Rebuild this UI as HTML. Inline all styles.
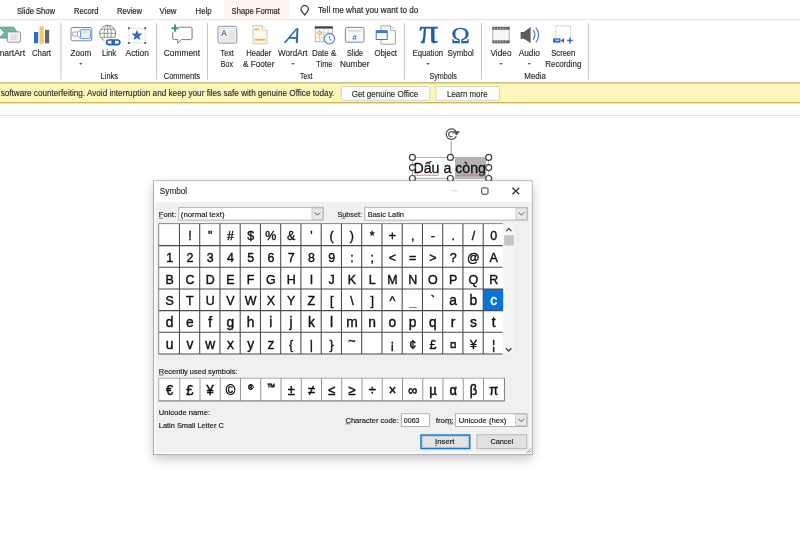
<!DOCTYPE html>
<html lang="en">
<head>
<meta charset="utf-8">
<title>PowerPoint - Symbol dialog</title>
<style>
html,body{margin:0;padding:0;background:#fff;overflow:hidden}
body{width:800px;height:533px;font-family:'Liberation Sans',sans-serif}
svg{display:block;opacity:.999;font-family:'Liberation Sans',sans-serif}
text{white-space:pre}
</style>
</head>
<body>
<svg width="800" height="533" viewBox="0 0 800 533">
<defs>
<filter id="shadow" x="-15%" y="-15%" width="130%" height="135%">
<feGaussianBlur in="SourceAlpha" stdDeviation="6"/>
<feOffset dx="0" dy="4" result="b"/>
<feComponentTransfer><feFuncA type="linear" slope="0.24"/></feComponentTransfer>
<feMerge><feMergeNode/><feMergeNode in="SourceGraphic"/></feMerge>
</filter>
</defs>
<rect width="800" height="533" fill="#ffffff"/>

<g id="tabbar">
<rect x="0" y="0" width="800" height="19.5" fill="#ffffff"/>
<rect x="223.6" y="0" width="65.6" height="19.3" fill="#fdf5ee"/>
<rect x="0" y="19.2" width="800" height="1" fill="#e1e2e3"/>
<text x="17.00" y="13.50" font-size="9" fill="#272727" textLength="38.00" lengthAdjust="spacingAndGlyphs" stroke="#272727" stroke-width="0.18">Slide Show</text>
<text x="74.00" y="13.50" font-size="9" fill="#272727" textLength="24.50" lengthAdjust="spacingAndGlyphs" stroke="#272727" stroke-width="0.18">Record</text>
<text x="117.00" y="13.50" font-size="9" fill="#272727" textLength="25.00" lengthAdjust="spacingAndGlyphs" stroke="#272727" stroke-width="0.18">Review</text>
<text x="159.60" y="13.50" font-size="9" fill="#272727" textLength="16.80" lengthAdjust="spacingAndGlyphs" stroke="#272727" stroke-width="0.18">View</text>
<text x="195.60" y="13.50" font-size="9" fill="#272727" textLength="16.00" lengthAdjust="spacingAndGlyphs" stroke="#272727" stroke-width="0.18">Help</text>
<text x="231.60" y="13.50" font-size="9" fill="#272727" textLength="48.40" lengthAdjust="spacingAndGlyphs" stroke="#272727" stroke-width="0.18">Shape Format</text>
<text x="318.00" y="12.50" font-size="9" fill="#272727" textLength="100.40" lengthAdjust="spacingAndGlyphs" stroke="#272727" stroke-width="0.18">Tell me what you want to do</text>
<path d="M304.700 5.500a3.700 3.700 0 0 1 3.700 3.700c0 1.800-1.500 3-3.700 5.800c-2.200-2.800-3.700-4-3.700-5.800a3.700 3.700 0 0 1 3.700-3.700z" fill="#fff" stroke="#3a3a3a" stroke-width="1.25" stroke-linejoin="round"/>
</g>
<g id="ribbon">
<rect x="60.50" y="23" width="1" height="56.5" fill="#c6c6c6"/>
<rect x="156.10" y="23" width="1" height="56.5" fill="#c6c6c6"/>
<rect x="207.00" y="23" width="1" height="56.5" fill="#c6c6c6"/>
<rect x="403.80" y="23" width="1" height="56.5" fill="#c6c6c6"/>
<rect x="480.90" y="23" width="1" height="56.5" fill="#c6c6c6"/>
<rect x="587.80" y="23" width="1" height="56.5" fill="#c6c6c6"/>
<text x="-8.50" y="55.70" font-size="9" fill="#2a2a2a" textLength="33.50" lengthAdjust="spacingAndGlyphs" stroke="#2a2a2a" stroke-width="0.15">SmartArt</text>
<text x="32.00" y="55.70" font-size="9" fill="#2a2a2a" textLength="19.00" lengthAdjust="spacingAndGlyphs" stroke="#2a2a2a" stroke-width="0.15">Chart</text>
<text x="70.60" y="55.70" font-size="9" fill="#2a2a2a" textLength="20.70" lengthAdjust="spacingAndGlyphs" stroke="#2a2a2a" stroke-width="0.15">Zoom</text>
<text x="101.90" y="55.70" font-size="9" fill="#2a2a2a" textLength="14.40" lengthAdjust="spacingAndGlyphs" stroke="#2a2a2a" stroke-width="0.15">Link</text>
<text x="125.60" y="55.70" font-size="9" fill="#2a2a2a" textLength="23.20" lengthAdjust="spacingAndGlyphs" stroke="#2a2a2a" stroke-width="0.15">Action</text>
<text x="163.80" y="55.70" font-size="9" fill="#2a2a2a" textLength="36.20" lengthAdjust="spacingAndGlyphs" stroke="#2a2a2a" stroke-width="0.15">Comment</text>
<text x="220.60" y="55.70" font-size="9" fill="#2a2a2a" textLength="13.20" lengthAdjust="spacingAndGlyphs" stroke="#2a2a2a" stroke-width="0.15">Text</text>
<text x="220.80" y="66.80" font-size="9" fill="#2a2a2a" textLength="12.20" lengthAdjust="spacingAndGlyphs" stroke="#2a2a2a" stroke-width="0.15">Box</text>
<text x="246.20" y="55.70" font-size="9" fill="#2a2a2a" textLength="25.10" lengthAdjust="spacingAndGlyphs" stroke="#2a2a2a" stroke-width="0.15">Header</text>
<text x="243.00" y="66.80" font-size="9" fill="#2a2a2a" textLength="31.40" lengthAdjust="spacingAndGlyphs" stroke="#2a2a2a" stroke-width="0.15">&amp; Footer</text>
<text x="278.00" y="55.70" font-size="9" fill="#2a2a2a" textLength="29.50" lengthAdjust="spacingAndGlyphs" stroke="#2a2a2a" stroke-width="0.15">WordArt</text>
<text x="311.90" y="55.70" font-size="9" fill="#2a2a2a" textLength="24.40" lengthAdjust="spacingAndGlyphs" stroke="#2a2a2a" stroke-width="0.15">Date &amp;</text>
<text x="316.30" y="66.80" font-size="9" fill="#2a2a2a" textLength="16.20" lengthAdjust="spacingAndGlyphs" stroke="#2a2a2a" stroke-width="0.15">Time</text>
<text x="347.00" y="55.70" font-size="9" fill="#2a2a2a" textLength="16.00" lengthAdjust="spacingAndGlyphs" stroke="#2a2a2a" stroke-width="0.15">Slide</text>
<text x="340.00" y="66.80" font-size="9" fill="#2a2a2a" textLength="29.40" lengthAdjust="spacingAndGlyphs" stroke="#2a2a2a" stroke-width="0.15">Number</text>
<text x="374.40" y="55.70" font-size="9" fill="#2a2a2a" textLength="22.60" lengthAdjust="spacingAndGlyphs" stroke="#2a2a2a" stroke-width="0.15">Object</text>
<text x="412.50" y="55.70" font-size="9" fill="#2a2a2a" textLength="30.50" lengthAdjust="spacingAndGlyphs" stroke="#2a2a2a" stroke-width="0.15">Equation</text>
<text x="447.50" y="55.70" font-size="9" fill="#2a2a2a" textLength="26.30" lengthAdjust="spacingAndGlyphs" stroke="#2a2a2a" stroke-width="0.15">Symbol</text>
<text x="490.50" y="55.70" font-size="9" fill="#2a2a2a" textLength="21.00" lengthAdjust="spacingAndGlyphs" stroke="#2a2a2a" stroke-width="0.15">Video</text>
<text x="518.70" y="55.70" font-size="9" fill="#2a2a2a" textLength="21.30" lengthAdjust="spacingAndGlyphs" stroke="#2a2a2a" stroke-width="0.15">Audio</text>
<text x="551.30" y="55.70" font-size="9" fill="#2a2a2a" textLength="24.00" lengthAdjust="spacingAndGlyphs" stroke="#2a2a2a" stroke-width="0.15">Screen</text>
<text x="545.30" y="66.80" font-size="9" fill="#2a2a2a" textLength="36.00" lengthAdjust="spacingAndGlyphs" stroke="#2a2a2a" stroke-width="0.15">Recording</text>
<text x="100.60" y="79.20" font-size="9" fill="#2a2a2a" textLength="17.40" lengthAdjust="spacingAndGlyphs" stroke="#2a2a2a" stroke-width="0.15">Links</text>
<text x="163.80" y="79.20" font-size="9" fill="#2a2a2a" textLength="36.20" lengthAdjust="spacingAndGlyphs" stroke="#2a2a2a" stroke-width="0.15">Comments</text>
<text x="300.00" y="79.20" font-size="9" fill="#2a2a2a" textLength="12.50" lengthAdjust="spacingAndGlyphs" stroke="#2a2a2a" stroke-width="0.15">Text</text>
<text x="429.40" y="79.20" font-size="9" fill="#2a2a2a" textLength="27.50" lengthAdjust="spacingAndGlyphs" stroke="#2a2a2a" stroke-width="0.15">Symbols</text>
<text x="524.30" y="79.20" font-size="9" fill="#2a2a2a" textLength="21.70" lengthAdjust="spacingAndGlyphs" stroke="#2a2a2a" stroke-width="0.15">Media</text>
<path d="M79.10 63h3.400l-1.700 2z" fill="#5a5a5a"/>
<path d="M291.30 63h3.400l-1.700 2z" fill="#5a5a5a"/>
<path d="M426.30 63h3.400l-1.700 2z" fill="#5a5a5a"/>
<path d="M499.30 63h3.400l-1.700 2z" fill="#5a5a5a"/>
<path d="M527.50 63h3.400l-1.700 2z" fill="#5a5a5a"/>
<g id="ic-smartart"><path d="M-.500 27.200h14l3 4-3.400 6.800h-13.600l5-5.500z" fill="#74b49c" stroke="#4f9a7e" stroke-width="0.9"/><rect x="7.300" y="31.900" width="13.200" height="10.300" rx="1.300" fill="#f6f4f4" stroke="#8c8c8c" stroke-width="0.9"/><path d="M10 35h8M10 37.200h8M10 39.400h8M12.600 34v6.400M15.400 34v6.400" stroke="#e9c9cc" stroke-width="0.7" fill="none"/></g>
<g id="ic-chart"><rect x="38.900" y="25.800" width="5.400" height="18.400" fill="#fbf0c6" opacity="0.7"/><rect x="34" y="32" width="4.200" height="11.300" fill="#2f6fc2"/><rect x="39.600" y="26.600" width="4" height="17" fill="#f3c964"/><rect x="45" y="29.800" width="4.200" height="13.500" fill="#6b6462"/></g>
<g id="ic-zoom" fill="none"><rect x="71" y="27.500" width="20.800" height="13.300" rx="1.800" stroke="#868686" stroke-width="1" fill="#fbfbfb"/><rect x="72.800" y="32" width="4.600" height="4" rx="0.600" stroke="#7f93ad" stroke-width="0.8"/><path d="M77.400 32.300l3.200-2.300M77.400 35.700l3.200 2.600" stroke="#5b8fd0" stroke-width="0.8"/><rect x="80.600" y="29.600" width="9.800" height="9" rx="0.800" stroke="#5b8fd0" stroke-width="0.9" fill="#e8f0fa"/><path d="M83 32h4" stroke="#e8b58c" stroke-width="0.8"/></g>
<g id="ic-link" fill="none"><circle cx="107.700" cy="33.300" r="8" stroke="#868686" stroke-width="1" fill="#fcfcfc"/><ellipse cx="107.700" cy="33.300" rx="3.600" ry="8" stroke="#868686" stroke-width="0.8"/><path d="M99.700 33.300h16M101 29.300h13.400M101 37.300h13.400M107.700 25.300v16" stroke="#868686" stroke-width="0.8"/><rect x="104.500" y="38" width="17" height="8" fill="#fff" stroke="none"/><rect x="106.600" y="40" width="7.600" height="4.600" rx="2.300" stroke="#1f5eb4" stroke-width="1.700"/><rect x="112.200" y="40" width="7.600" height="4.600" rx="2.300" stroke="#1f5eb4" stroke-width="1.700"/></g>
<g id="ic-action"><rect x="128.800" y="28.200" width="16.400" height="14.800" fill="#fdfdfd" stroke="#b9b9b9" stroke-width="0.8" stroke-dasharray="1 1"/><g fill="#5a5a5a"><rect x="127.900" y="27.300" width="1.900" height="1.900"/><rect x="144.300" y="27.300" width="1.900" height="1.900"/><rect x="127.900" y="42" width="1.900" height="1.900"/><rect x="144.300" y="42" width="1.900" height="1.900"/></g><path d="M137 29.800l1.410 3.760 4.010.180-3.140 2.500 1.070 3.870-3.350-2.210-3.350 2.210 1.070-3.870-3.140-2.500 4.010-.180z" fill="#2c6bc0"/></g>
<g id="ic-comment" fill="none"><path d="M174.300 27.200h16.200a1.600 1.600 0 0 1 1.600 1.600v9.200a1.600 1.600 0 0 1-1.600 1.600h-9l-3.700 3.600v-3.600h-3.500a1.600 1.600 0 0 1-1.600-1.600v-9.200a1.600 1.600 0 0 1 1.600-1.600z" stroke="#7a7a7a" stroke-width="1" fill="#fdfdfd"/><rect x="171" y="24.500" width="8" height="7.600" fill="#fff" stroke="none"/><path d="M175 24.600v7.200M171.400 28.200h7.200" stroke="#3c9a70" stroke-width="1.900"/></g>
<g id="ic-textbox"><rect x="218" y="26.300" width="18.800" height="16.800" rx="1.400" fill="#f5f5f5" stroke="#939393" stroke-width="1"/><rect x="220.200" y="28.500" width="14.400" height="12.400" fill="#fbfbfb" stroke="#d2d2d2" stroke-width="0.6"/><rect x="228.500" y="30" width="5.400" height="10" fill="#e6e6e6"/><rect x="221" y="37" width="8" height="3" fill="#e8e8e8"/><text x="221" y="36.300" font-size="8.500" font-weight="bold" fill="#4b76b8">A</text></g>
<g id="ic-hf"><path d="M253 25.600h9.400l4.600 4.600v13.600h-14z" fill="#fdf7ea" stroke="#c4c2bd" stroke-width="0.9"/><path d="M262.400 25.600v4.600h4.600" fill="#fff" stroke="#c4c2bd" stroke-width="0.8"/><rect x="254.700" y="28.600" width="4.400" height="1.700" fill="#efb54a"/><rect x="254.700" y="38.800" width="10.400" height="1.800" fill="#efb54a"/></g>
<g id="ic-wordart"><text transform="translate(283.600 42.700) skewX(-24)" font-size="21.500" fill="#2566b8">A</text></g>
<g id="ic-datetime"><rect x="315.200" y="27" width="17.200" height="14.800" fill="#fafafa" stroke="#a9a9a9" stroke-width="0.8"/><rect x="314.800" y="26.300" width="18" height="2.300" fill="#454545"/><path d="M319.500 28.600v13.200M323.800 28.600v13.200M328.100 28.600v13.200M315.200 32.800h17.200M315.200 37.200h17.200" stroke="#c3c9c3" stroke-width="0.7" fill="none"/><circle cx="319.700" cy="33" r="1.800" fill="#f6d9b8" stroke="#ec9a48" stroke-width="0.8"/><circle cx="329.400" cy="38.800" r="5.200" fill="#f7f9fd" stroke="#4d82d2" stroke-width="1.100"/><path d="M329.400 35.600v3.200l2.200 1.600" stroke="#6a6a6a" stroke-width="0.8" fill="none"/></g>
<g id="ic-slidenum"><rect x="345.400" y="27.400" width="18.600" height="14.800" rx="1.400" fill="#f8f8f8" stroke="#868686" stroke-width="1"/><rect x="348" y="29.800" width="13.400" height="2" fill="#dcdcdc"/><text x="352.300" y="39.600" font-size="8" font-weight="bold" font-style="italic" fill="#3a72c4">#</text></g>
<g id="ic-object"><path d="M381 25.900h9.600l4.800 4.800v13.500h-14.400z" fill="#fcfcfc" stroke="#9a9a9a" stroke-width="0.9"/><path d="M390.600 25.900v4.800h4.800" fill="#fff" stroke="#9a9a9a" stroke-width="0.8"/><rect x="376.200" y="30.700" width="11" height="8.800" fill="#fbfdff" stroke="#3d78cc" stroke-width="1"/><rect x="376.200" y="30.700" width="11" height="2.400" fill="#3d78cc"/></g>
<g id="ic-eq" font-family="'Liberation Serif',serif" fill="#1d5fae"><text x="419.300" y="42.500" font-size="33" stroke="#1d5fae" stroke-width="0.35" textLength="19" lengthAdjust="spacingAndGlyphs">π</text><text x="451.300" y="42.700" font-size="23.500" stroke="#1d5fae" stroke-width="0.3" textLength="18.500" lengthAdjust="spacingAndGlyphs">Ω</text></g>
<g id="ic-video"><rect x="492.800" y="27.200" width="16.400" height="15.600" fill="#f7f7f7" stroke="#9b9b9b" stroke-width="0.8"/><rect x="492.500" y="26.900" width="17" height="2.800" fill="#5c5c5c"/><rect x="492.500" y="40.400" width="17" height="2.800" fill="#5c5c5c"/><path d="M494 28.300h14M494 41.800h14" stroke="#d8d8d8" stroke-width="1" stroke-dasharray="1.400 1.400" fill="none"/></g>
<g id="ic-audio"><path d="M520.600 31.900h3.200l6.800-5v16.200l-6.800-4.300h-3.200z" fill="#5b5b5b"/><path d="M533 30.200a7 7 0 0 1 0 9.600M535.800 27.600a11 11 0 0 1 0 14.800" fill="none" stroke="#3f7ccb" stroke-width="1.200"/></g>
<g id="ic-screenrec"><path d="M555.800 37.600v-11.800h14.800v11.800" fill="none" stroke="#9a9a9a" stroke-width="0.7" stroke-dasharray="1 0.800"/><rect x="553" y="38.200" width="7.600" height="4.600" rx="0.600" fill="#3a74c6"/><path d="M560.600 40.500l3.400-2.300v4.600z" fill="#555"/><rect x="555.600" y="39.600" width="3.400" height="1.200" fill="#cfe0f5"/><path d="M570 37.800v5.600M567.200 40.600h5.600" stroke="#2f6fc0" stroke-width="1.500" fill="none"/></g>
</g>
<g id="notice">
<rect x="-2" y="82.850" width="804" height="19.900" fill="#fdf6bb" stroke="#c4ab52" stroke-width="1.2"/>
<text x="0.70" y="96.30" font-size="9" fill="#2c2c2c" textLength="333.70" lengthAdjust="spacingAndGlyphs" stroke="#2c2c2c" stroke-width="0.15">software counterfeiting. Avoid interruption and keep your files safe with genuine Office today.</text>
<rect x="341.3" y="86.5" width="88.5" height="13.8" rx="1" fill="#fdfdfb" stroke="#d2d0c0" stroke-width="0.9"/>
<text x="351.70" y="96.50" font-size="9" fill="#2c2c2c" textLength="66.60" lengthAdjust="spacingAndGlyphs" stroke="#2c2c2c" stroke-width="0.15">Get genuine Office</text>
<rect x="436" y="86.5" width="63.4" height="13.8" rx="1" fill="#fdfdfb" stroke="#d2d0c0" stroke-width="0.9"/>
<text x="447.00" y="96.50" font-size="9" fill="#2c2c2c" textLength="40.60" lengthAdjust="spacingAndGlyphs" stroke="#2c2c2c" stroke-width="0.15">Learn more</text>
</g>
<rect x="0" y="115" width="800" height="1" fill="#e3e3e3"/>
<g id="textbox">
<rect x="412.4" y="157.4" width="76.3" height="21.1" fill="none" stroke="#9a9a9a" stroke-width="0.7"/>
<rect x="455" y="157.4" width="31.2" height="20.4" fill="#b3b3b3"/>
<path d="M451.2 141.3V155" stroke="#8a8a8a" stroke-width="0.9"/>
<g fill="none" stroke="#4f4f4f" stroke-width="1.2"><path d="M456.300 136.200a5.300 5.300 0 1 1 .200-3.600"/><path d="M453.700 133.400a2.600 2.600 0 1 0-1.200 3"/></g><path d="M453 131.300h7l-3.300 4.300z" fill="#4f4f4f"/>
<text x="413.50" y="173.00" font-size="15.4" fill="#111" textLength="72.50" lengthAdjust="spacingAndGlyphs" stroke="#111" stroke-width="0.3">Dấu a còng</text>
<path d="M414.5 175.2h24" stroke="#e05a5a" stroke-width="0.8"/><path d="M455.5 175.2h30" stroke="#d86a6a" stroke-width="0.8"/>
<circle cx="412.4" cy="157.4" r="3" fill="#fff" stroke="#3a3a3a" stroke-width="1.15"/>
<circle cx="412.4" cy="167.6" r="3" fill="#fff" stroke="#3a3a3a" stroke-width="1.15"/>
<circle cx="412.4" cy="178.5" r="3" fill="#fff" stroke="#3a3a3a" stroke-width="1.15"/>
<circle cx="450.4" cy="157.4" r="3" fill="#fff" stroke="#3a3a3a" stroke-width="1.15"/>
<circle cx="450.4" cy="178.5" r="3" fill="#fff" stroke="#3a3a3a" stroke-width="1.15"/>
<circle cx="488.7" cy="157.4" r="3" fill="#fff" stroke="#3a3a3a" stroke-width="1.15"/>
<circle cx="488.7" cy="167.6" r="3" fill="#fff" stroke="#3a3a3a" stroke-width="1.15"/>
<circle cx="488.7" cy="178.5" r="3" fill="#fff" stroke="#3a3a3a" stroke-width="1.15"/>
</g>
<g id="symbol-dialog">
<rect x="153.8" y="181" width="378.2" height="273.6" fill="#f0f0f0" filter="url(#shadow)"/>
<rect x="153.8" y="181" width="378.2" height="273.6" fill="#f0f0f0" stroke="#8c8c8c" stroke-width="0.9"/>
<rect x="155.0" y="182.2" width="375.8" height="271.20000000000005" fill="none" stroke="#ffffff" stroke-width="1.7"/>
<rect x="154.3" y="181.5" width="377.2" height="20.500" fill="#ffffff"/>
<text x="159.80" y="194.10" font-size="9" fill="#2a2a2a" textLength="27.40" lengthAdjust="spacingAndGlyphs" stroke="#2a2a2a" stroke-width="0.15">Symbol</text>
<path d="M451.500 190.800h6" stroke="#cfcfcf" stroke-width="0.9"/>
<rect x="481.700" y="187.900" width="6.300" height="6.300" rx="1" fill="none" stroke="#3c3c3c" stroke-width="1"/>
<path d="M512.400 187.700l6.800 6.600m0-6.600l-6.800 6.600" stroke="#333" stroke-width="1.25" fill="none"/>
<text x="158.80" y="217.00" font-size="8" fill="#1c1c1c" textLength="17.20" lengthAdjust="spacingAndGlyphs" stroke="#1c1c1c" stroke-width="0.18">Font:</text>
<path d="M158.800 218.200h4" stroke="#222" stroke-width="0.6"/>
<rect x="178.800" y="207.300" width="144.400" height="12.800" fill="#fff" stroke="#a3a3a3" stroke-width="0.8"/>
<text x="180.80" y="216.60" font-size="8" fill="#1c1c1c" textLength="43.70" lengthAdjust="spacingAndGlyphs" stroke="#1c1c1c" stroke-width="0.18">(normal text)</text>
<rect x="312" y="208" width="10.800" height="11.400" fill="#e9e9e9" stroke="#b0b0b0" stroke-width="0.6"/><path d="M314.600 212.400l2.800 2.800 2.800-2.800" fill="none" stroke="#444" stroke-width="0.9"/>
<path d="M341.500 218.200h3.800" stroke="#222" stroke-width="0.6"/>
<text x="337.50" y="217.00" font-size="8" fill="#1c1c1c" textLength="24.50" lengthAdjust="spacingAndGlyphs" stroke="#1c1c1c" stroke-width="0.18">Subset:</text>
<rect x="364.800" y="207.300" width="162.400" height="12.800" fill="#fff" stroke="#a3a3a3" stroke-width="0.8"/>
<text x="367.80" y="216.60" font-size="8" fill="#1c1c1c" textLength="36.20" lengthAdjust="spacingAndGlyphs" stroke="#1c1c1c" stroke-width="0.18">Basic Latin</text>
<rect x="516" y="208" width="10.800" height="11.400" fill="#e9e9e9" stroke="#b0b0b0" stroke-width="0.6"/><path d="M518.600 212.400l2.800 2.800 2.800-2.800" fill="none" stroke="#444" stroke-width="0.9"/>
<rect x="159.2" y="223.92" width="344.25" height="130.08" fill="#fff"/>
<rect x="483.20" y="288.96" width="20.25" height="21.68" fill="#0a74d6"/>
<path d="M179.45 223.62V354.40M199.70 223.62V354.40M219.95 223.62V354.40M240.20 223.62V354.40M260.45 223.62V354.40M280.70 223.62V354.40M300.95 223.62V354.40M321.20 223.62V354.40M341.45 223.62V354.40M361.70 223.62V354.40M381.95 223.62V354.40M402.20 223.62V354.40M422.45 223.62V354.40M442.70 223.62V354.40M462.95 223.62V354.40M483.20 223.62V354.40M158.70 245.60H502.65M158.70 267.28H502.65M158.70 288.96H502.65M158.70 310.64H502.65M158.70 332.32H502.65M158.70 354.00H502.65" stroke="#4a4a4a" stroke-width="1.05" fill="none"/>
<path d="M158.70 354.40V223.62H502.65" stroke="#858585" stroke-width="1" fill="none"/>
<g font-size="13.8" text-anchor="middle" fill="#101010" stroke="#101010" stroke-width="0.4">
<text transform="translate(189.88 240.27) scale(0.98 1)" font-size="12.700">!</text>
<text transform="translate(210.12 240.27) scale(0.98 1)" font-size="12.700">"</text>
<text transform="translate(230.38 240.27) scale(0.98 1)" font-size="12.700">#</text>
<text transform="translate(250.62 240.27) scale(0.98 1)" font-size="12.700">$</text>
<text transform="translate(270.88 240.27) scale(0.98 1)" font-size="12.700">%</text>
<text transform="translate(291.12 240.27) scale(0.98 1)" font-size="12.700">&amp;</text>
<text transform="translate(311.38 240.27) scale(0.98 1)" font-size="12.700">'</text>
<text transform="translate(331.62 240.27) scale(0.98 1)" font-size="12.700">(</text>
<text transform="translate(351.88 240.27) scale(0.98 1)" font-size="12.700">)</text>
<text transform="translate(372.12 240.27) scale(0.98 1)" font-size="12.700">*</text>
<text transform="translate(392.38 240.27) scale(0.98 1)" font-size="12.700">+</text>
<text transform="translate(412.62 240.27) scale(0.98 1)" font-size="12.700">,</text>
<text transform="translate(432.88 240.27) scale(0.98 1)" font-size="12.700">-</text>
<text transform="translate(453.12 240.27) scale(0.98 1)" font-size="12.700">.</text>
<text transform="translate(473.38 240.27) scale(0.98 1)" font-size="12.700">/</text>
<text transform="translate(493.62 240.27) scale(0.98 1)" font-size="12.700">0</text>
<text transform="translate(169.62 261.95) scale(0.98 1)" font-size="12.700">1</text>
<text transform="translate(189.88 261.95) scale(0.98 1)" font-size="12.700">2</text>
<text transform="translate(210.12 261.95) scale(0.98 1)" font-size="12.700">3</text>
<text transform="translate(230.38 261.95) scale(0.98 1)" font-size="12.700">4</text>
<text transform="translate(250.62 261.95) scale(0.98 1)" font-size="12.700">5</text>
<text transform="translate(270.88 261.95) scale(0.98 1)" font-size="12.700">6</text>
<text transform="translate(291.12 261.95) scale(0.98 1)" font-size="12.700">7</text>
<text transform="translate(311.38 261.95) scale(0.98 1)" font-size="12.700">8</text>
<text transform="translate(331.62 261.95) scale(0.98 1)" font-size="12.700">9</text>
<text transform="translate(351.88 261.95) scale(0.98 1)" font-size="12.700">:</text>
<text transform="translate(372.12 261.95) scale(0.98 1)" font-size="12.700">;</text>
<text transform="translate(392.38 261.95) scale(0.98 1)" font-size="12.700">&lt;</text>
<text transform="translate(412.62 261.95) scale(0.98 1)" font-size="12.700">=</text>
<text transform="translate(432.88 261.95) scale(0.98 1)" font-size="12.700">&gt;</text>
<text transform="translate(453.12 261.95) scale(0.98 1)" font-size="12.700">?</text>
<text transform="translate(473.38 261.95) scale(0.98 1)" font-size="12.700">@</text>
<text transform="translate(493.62 261.95) scale(0.98 1)" font-size="12.700">A</text>
<text transform="translate(169.62 283.63) scale(0.98 1)" font-size="12.700">B</text>
<text transform="translate(189.88 283.63) scale(0.98 1)" font-size="12.700">C</text>
<text transform="translate(210.12 283.63) scale(0.98 1)" font-size="12.700">D</text>
<text transform="translate(230.38 283.63) scale(0.98 1)" font-size="12.700">E</text>
<text transform="translate(250.62 283.63) scale(0.98 1)" font-size="12.700">F</text>
<text transform="translate(270.88 283.63) scale(0.98 1)" font-size="12.700">G</text>
<text transform="translate(291.12 283.63) scale(0.98 1)" font-size="12.700">H</text>
<text transform="translate(311.38 283.63) scale(0.98 1)" font-size="12.700">I</text>
<text transform="translate(331.62 283.63) scale(0.98 1)" font-size="12.700">J</text>
<text transform="translate(351.88 283.63) scale(0.98 1)" font-size="12.700">K</text>
<text transform="translate(372.12 283.63) scale(0.98 1)" font-size="12.700">L</text>
<text transform="translate(392.38 283.63) scale(0.98 1)" font-size="12.700">M</text>
<text transform="translate(412.62 283.63) scale(0.98 1)" font-size="12.700">N</text>
<text transform="translate(432.88 283.63) scale(0.98 1)" font-size="12.700">O</text>
<text transform="translate(453.12 283.63) scale(0.98 1)" font-size="12.700">P</text>
<text transform="translate(473.38 283.63) scale(0.98 1)" font-size="12.700">Q</text>
<text transform="translate(493.62 283.63) scale(0.98 1)" font-size="12.700">R</text>
<text transform="translate(169.62 305.31) scale(0.98 1)" font-size="12.700">S</text>
<text transform="translate(189.88 305.31) scale(0.98 1)" font-size="12.700">T</text>
<text transform="translate(210.12 305.31) scale(0.98 1)" font-size="12.700">U</text>
<text transform="translate(230.38 305.31) scale(0.98 1)" font-size="12.700">V</text>
<text transform="translate(250.62 305.31) scale(0.98 1)" font-size="12.700">W</text>
<text transform="translate(270.88 305.31) scale(0.98 1)" font-size="12.700">X</text>
<text transform="translate(291.12 305.31) scale(0.98 1)" font-size="12.700">Y</text>
<text transform="translate(311.38 305.31) scale(0.98 1)" font-size="12.700">Z</text>
<text transform="translate(331.62 305.31) scale(0.98 1)" font-size="12.700">[</text>
<text transform="translate(351.88 305.31) scale(0.98 1)" font-size="12.700">\</text>
<text transform="translate(372.12 305.31) scale(0.98 1)" font-size="12.700">]</text>
<text transform="translate(392.38 305.31) scale(0.98 1)" font-size="12.700">^</text>
<text transform="translate(412.62 305.31) scale(0.98 1)" font-size="12.700" fill="#7a7a7a" stroke="#7a7a7a">_</text>
<text transform="translate(432.88 305.31) scale(0.98 1)" font-size="12.700">`</text>
<text transform="translate(453.12 305.31) scale(1 1)">a</text>
<text transform="translate(473.38 305.31) scale(1 1)">b</text>
<text transform="translate(493.62 305.31)" fill="#fff" stroke="#fff">c</text>
<text transform="translate(169.62 326.99) scale(1 1)">d</text>
<text transform="translate(189.88 326.99) scale(1 1)">e</text>
<text transform="translate(210.12 326.99) scale(1 1)">f</text>
<text transform="translate(230.38 326.99) scale(1 1)">g</text>
<text transform="translate(250.62 326.99) scale(1 1)">h</text>
<text transform="translate(270.88 326.99) scale(1 1)">i</text>
<text transform="translate(291.12 326.99) scale(1 1)">j</text>
<text transform="translate(311.38 326.99) scale(1 1)">k</text>
<text transform="translate(331.62 326.99) scale(1 1)">l</text>
<text transform="translate(351.88 326.99) scale(1 1)">m</text>
<text transform="translate(372.12 326.99) scale(1 1)">n</text>
<text transform="translate(392.38 326.99) scale(1 1)">o</text>
<text transform="translate(412.62 326.99) scale(1 1)">p</text>
<text transform="translate(432.88 326.99) scale(1 1)">q</text>
<text transform="translate(453.12 326.99) scale(1 1)">r</text>
<text transform="translate(473.38 326.99) scale(1 1)">s</text>
<text transform="translate(493.62 326.99) scale(1 1)">t</text>
<text transform="translate(169.62 348.67) scale(1 1)">u</text>
<text transform="translate(189.88 348.67) scale(1 1)">v</text>
<text transform="translate(210.12 348.67) scale(1 1)">w</text>
<text transform="translate(230.38 348.67) scale(1 1)">x</text>
<text transform="translate(250.62 348.67) scale(1 1)">y</text>
<text transform="translate(270.88 348.67) scale(1 1)">z</text>
<text transform="translate(291.12 348.67) scale(0.98 1)" font-size="12.700">{</text>
<text transform="translate(311.38 348.67) scale(0.98 1)" font-size="12.700">|</text>
<text transform="translate(331.62 348.67) scale(0.98 1)" font-size="12.700">}</text>
<text transform="translate(351.88 345.47) scale(0.98 1)" font-size="12.700">~</text>
<text transform="translate(392.38 348.67) scale(0.98 1)" font-size="12.700">¡</text>
<text transform="translate(412.62 348.67) scale(0.98 1)" font-size="12.700">¢</text>
<text transform="translate(432.88 348.67) scale(0.98 1)" font-size="12.700">£</text>
<text transform="translate(453.12 348.67) scale(0.98 1)" font-size="12.700">¤</text>
<text transform="translate(473.38 348.67) scale(0.98 1)" font-size="12.700">¥</text>
<text transform="translate(493.62 348.67) scale(0.98 1)" font-size="12.700">¦</text>
</g>
<rect x="503.45" y="223.62" width="11.200" height="130.78" fill="#f5f5f5"/>
<path d="M506.100 231.100l2.700-2.700 2.700 2.700" fill="none" stroke="#3d3d3d" stroke-width="1.250"/>
<rect x="504.200" y="235.200" width="9.600" height="10.300" fill="#c4c4c4"/>
<path d="M506 348.300l2.700 2.700 2.700-2.700" fill="none" stroke="#3d3d3d" stroke-width="1.250"/>
<text x="158.80" y="373.70" font-size="8" fill="#1c1c1c" textLength="78.70" lengthAdjust="spacingAndGlyphs" stroke="#1c1c1c" stroke-width="0.18">Recently used symbols:</text>
<path d="M158.800 375h4.600" stroke="#222" stroke-width="0.6"/>
<rect x="158.80" y="378.2" width="345.65" height="22.70" fill="#fff" stroke="#a9a9a9" stroke-width="0.9"/>
<path d="M158.80 400.90H504.45V378.2" fill="none" stroke="#7c7c7c" stroke-width="0.9"/>
<path d="M179.75 378.2V401.2M200.00 378.2V401.2M220.25 378.2V401.2M240.50 378.2V401.2M260.75 378.2V401.2M281.00 378.2V401.2M301.25 378.2V401.2M321.50 378.2V401.2M341.75 378.2V401.2M362.00 378.2V401.2M382.25 378.2V401.2M402.50 378.2V401.2M422.75 378.2V401.2M443.00 378.2V401.2M463.25 378.2V401.2M483.50 378.2V401.2" stroke="#8a8a8a" stroke-width="0.9" fill="none"/>
<g font-size="13.8" text-anchor="middle" fill="#101010" stroke="#101010" stroke-width="0.5">
<text transform="translate(169.72 394.60) scale(.94 1)">€</text>
<text transform="translate(189.97 394.60) scale(.94 1)">£</text>
<text transform="translate(210.22 394.60) scale(.94 1)">¥</text>
<text transform="translate(230.47 394.60) scale(.94 1)">©</text>
<text transform="translate(250.72 390.40) scale(.94 1)" font-size="8">®</text>
<text transform="translate(270.97 390.40) scale(.94 1)" font-size="9">™</text>
<text transform="translate(291.22 394.60) scale(.94 1)">±</text>
<text transform="translate(311.47 394.60) scale(.94 1)">≠</text>
<text transform="translate(331.72 394.60) scale(.94 1)">≤</text>
<text transform="translate(351.97 394.60) scale(.94 1)">≥</text>
<text transform="translate(372.22 394.60) scale(.94 1)">÷</text>
<text transform="translate(392.47 394.60) scale(.94 1)">×</text>
<text transform="translate(412.72 394.60) scale(.94 1)">∞</text>
<text transform="translate(432.97 394.60) scale(.94 1)">µ</text>
<text transform="translate(453.22 394.60) scale(.94 1)">α</text>
<text transform="translate(473.47 394.60) scale(.94 1)">β</text>
<text transform="translate(493.72 394.60) scale(.94 1)">π</text>
</g>
<text x="158.80" y="415.00" font-size="8" fill="#1c1c1c" textLength="51.20" lengthAdjust="spacingAndGlyphs" stroke="#1c1c1c" stroke-width="0.18">Unicode name:</text>
<text x="158.80" y="428.00" font-size="8" fill="#1c1c1c" textLength="65.00" lengthAdjust="spacingAndGlyphs" stroke="#1c1c1c" stroke-width="0.18">Latin Small Letter C</text>
<text x="345.50" y="422.50" font-size="8" fill="#1c1c1c" textLength="53.30" lengthAdjust="spacingAndGlyphs" stroke="#1c1c1c" stroke-width="0.18">Character code:</text>
<path d="M345.500 423.800h4.800" stroke="#222" stroke-width="0.6"/>
<rect x="401.300" y="413.800" width="28.200" height="12.600" fill="#fff" stroke="#a3a3a3" stroke-width="0.8"/>
<text x="403.80" y="422.80" font-size="8" fill="#1c1c1c" textLength="15.70" lengthAdjust="spacingAndGlyphs" stroke="#1c1c1c" stroke-width="0.18">0063</text>
<text x="435.80" y="422.50" font-size="8" fill="#1c1c1c" textLength="18.00" lengthAdjust="spacingAndGlyphs" stroke="#1c1c1c" stroke-width="0.18">from:</text>
<path d="M447.300 423.800h6" stroke="#222" stroke-width="0.6"/>
<rect x="455.500" y="413.800" width="71.600" height="12.600" fill="#fff" stroke="#a3a3a3" stroke-width="0.8"/>
<text x="458.80" y="422.80" font-size="8" fill="#1c1c1c" textLength="47.50" lengthAdjust="spacingAndGlyphs" stroke="#1c1c1c" stroke-width="0.18">Unicode (hex)</text>
<rect x="515.800" y="414.400" width="10.800" height="11.400" fill="#e9e9e9" stroke="#b0b0b0" stroke-width="0.6"/><path d="M518.400 418.800l2.800 2.800 2.800-2.800" fill="none" stroke="#444" stroke-width="0.9"/>
<rect x="421" y="435" width="48.800" height="13.600" fill="#e3e3e3" stroke="#0b76d6" stroke-width="1.4"/>
<rect x="422.300" y="436.300" width="46.200" height="11" fill="none" stroke="#3a4a5c" stroke-width="0.5" stroke-dasharray="1 1" opacity="0.8"/>
<text x="435.00" y="444.00" font-size="8" fill="#1c1c1c" textLength="19.50" lengthAdjust="spacingAndGlyphs" stroke="#1c1c1c" stroke-width="0.18">Insert</text>
<path d="M435 445.300h2.200" stroke="#222" stroke-width="0.6"/>
<rect x="477" y="434.800" width="49.800" height="14" fill="#e1e1e1" stroke="#a8a8a8" stroke-width="0.8"/>
<text x="490.40" y="444.00" font-size="8" fill="#1c1c1c" textLength="22.80" lengthAdjust="spacingAndGlyphs" stroke="#1c1c1c" stroke-width="0.18">Cancel</text>
<path d="M526.300 453.300l5-5M528.800 453.300l2.500-2.500" stroke="#8d8d8d" stroke-width="0.9" fill="none"/>
</g>
</svg>
</body>
</html>
